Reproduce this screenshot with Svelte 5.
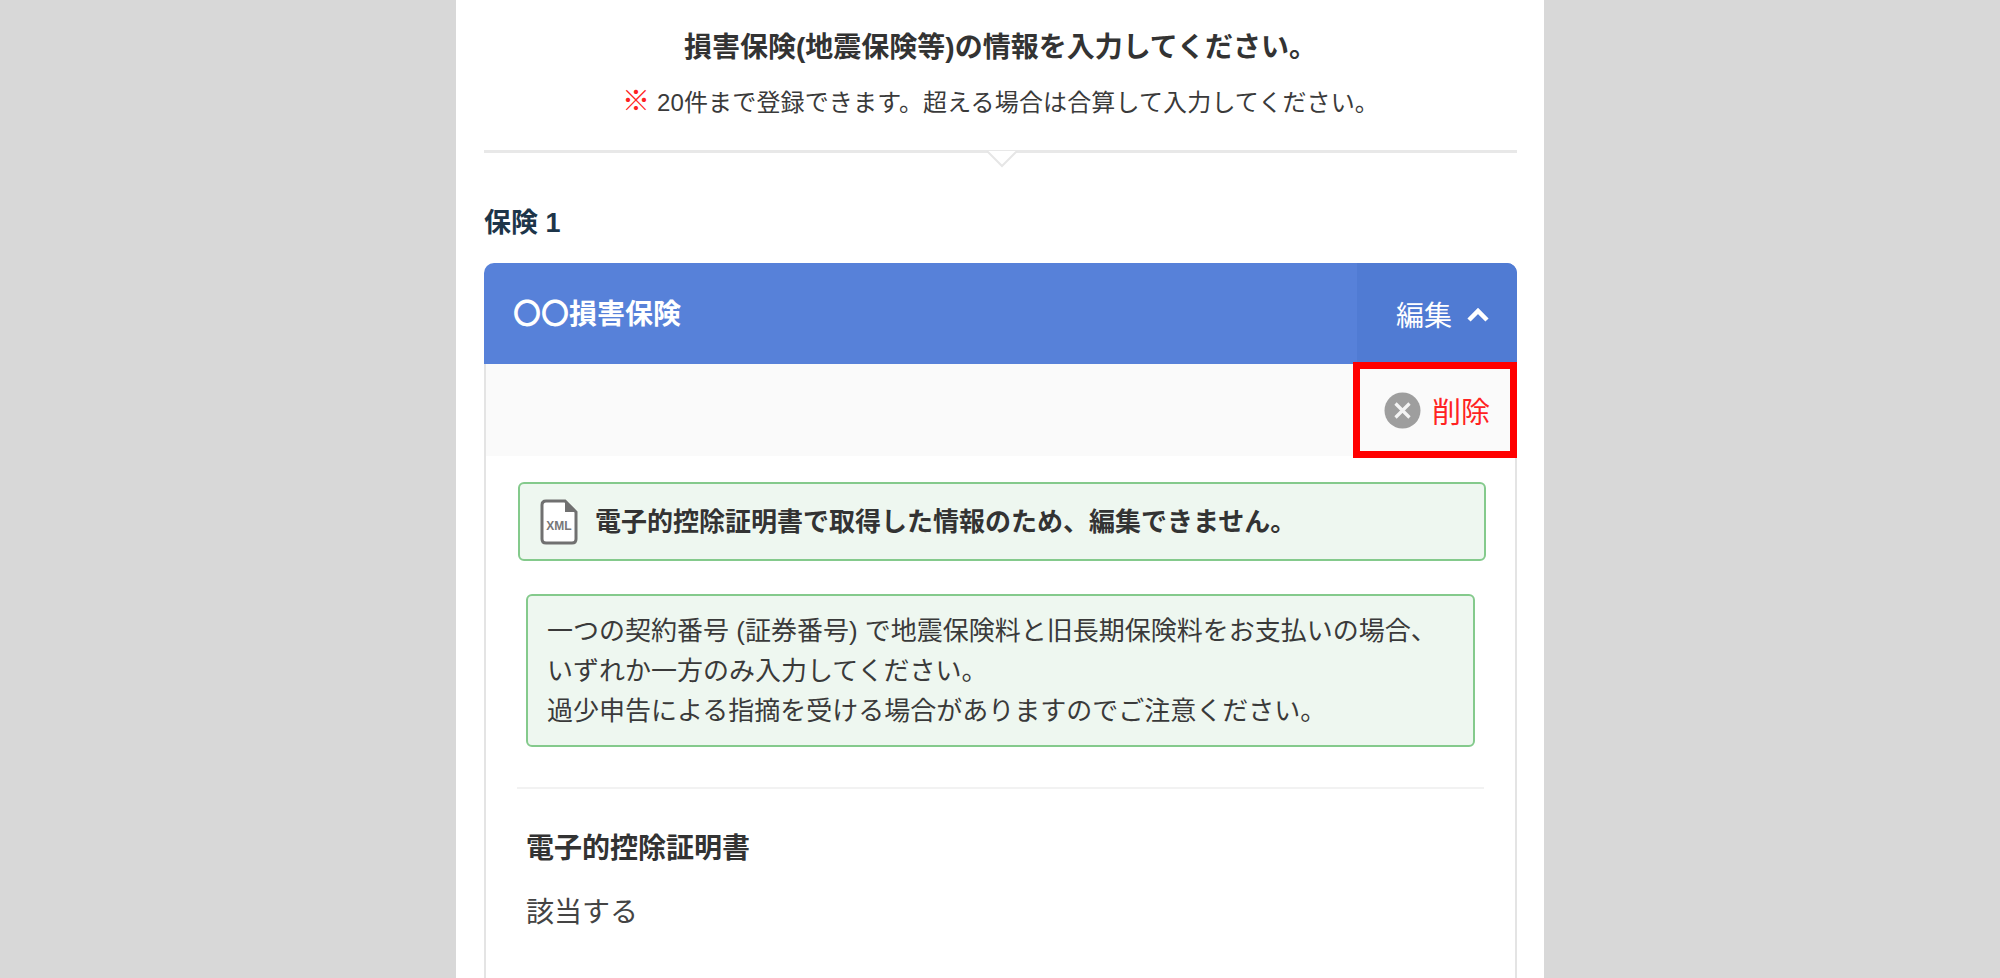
<script lang="ts">
  const noteLines = [
    '一つの契約番号 (証券番号) で地震保険料と旧長期保険料をお支払いの場合、',
    'いずれか一方のみ入力してください。',
    '過少申告による指摘を受ける場合がありますのでご注意ください。'
  ];
</script>

<main class="page">
  <header class="intro">
    <h1>損害保険(地震保険等)の情報を入力してください。</h1>
    <p><span class="mark">※</span> 20件まで登録できます。超える場合は合算して入力してください。</p>
  </header>

  <div class="rule">
    <svg class="notch" width="32" height="17" viewBox="0 0 32 17">
      <path d="M1 0 L16 15 L31 0" fill="#fff" stroke="#e6e6e6" stroke-width="2" />
    </svg>
  </div>

  <h2>保険 1</h2>

  <section class="card">
    <div class="card-head">
      <span class="card-title">〇〇損害保険</span>
      <button class="edit">
        編集
        <svg width="24" height="16" viewBox="0 0 24 16">
          <path d="M3 13 L12 4 L21 13" fill="none" stroke="#fff" stroke-width="4.5" />
        </svg>
      </button>
    </div>

    <div class="delete-row">
      <button class="delete">
        <svg width="37" height="37" viewBox="0 0 37 37">
          <circle cx="18.5" cy="18.5" r="18" fill="#9e9e9e" />
          <path d="M11.5 11.5 L25.5 25.5 M25.5 11.5 L11.5 25.5" stroke="#f4f4f4" stroke-width="3.2" />
        </svg>
        削除
      </button>
      <div class="highlight"></div>
    </div>

    <div class="card-body">
      <div class="notice">
        <svg width="38" height="46" viewBox="0 0 38 46">
          <path d="M6 2 H25 L36 13 V40 Q36 44 32 44 H6 Q2 44 2 40 V6 Q2 2 6 2 Z" fill="#fff" stroke="#707070" stroke-width="3" />
          <path d="M25 2 L36 13 H25 Z" fill="#707070" />
          <text x="19" y="31" text-anchor="middle">XML</text>
        </svg>
        <strong>電子的控除証明書で取得した情報のため、編集できません。</strong>
      </div>

      <div class="note">
        {#each noteLines as line}
          <p>{line}</p>
        {/each}
      </div>

      <hr />

      <dl>
        <dt>電子的控除証明書</dt>
        <dd>該当する</dd>
      </dl>
    </div>
  </section>
</main>

<style>
  :global(body) {
    background: #d8d8d8;
    overflow: hidden;
  }

  .page {
    box-sizing: border-box;
    width: 1088px;
    height: 978px;
    margin-left: 456px;
    padding: 0 27px 0 28px;
    background: #fff;
    overflow: hidden;
    color: #333;
    font-family: "Liberation Sans", "Noto Sans CJK JP", sans-serif;
  }

  .intro {
    padding-top: 28px;
    text-align: center;
  }

  h1 {
    margin: 0;
    font-size: 28px;
    line-height: 40px;
    font-weight: 700;
  }

  .intro p {
    margin: 16px 0 0;
    height: 36px;
    color: #3a3a3a;
    font-size: 24px;
    letter-spacing: 0.15px;
    line-height: 36px;
  }

  .mark {
    color: #f22;
    font-size: 28px;
    font-weight: 700;
  }

  .rule {
    position: relative;
    height: 3px;
    margin-top: 30px;
    background: #e8e8e8;
  }

  .notch {
    position: absolute;
    top: 1px;
    left: 502px;
  }

  h2 {
    margin: 50px 0 0;
    color: #1d3549;
    font-size: 27px;
    line-height: 40px;
    font-weight: 700;
  }

  .card {
    margin-top: 20px;
    height: 800px;
    border-radius: 10px 10px 0 0;
    overflow: hidden;
  }

  .card-head {
    display: flex;
    justify-content: space-between;
    height: 101px;
    background: #5781d9;
    color: #fff;
  }

  .card-title {
    padding: 1px 0 0 29px;
    font-size: 28px;
    font-weight: 700;
    line-height: 101px;
  }

  button {
    border: 0;
    background: none;
    padding: 0;
    font: inherit;
  }

  .edit {
    display: flex;
    align-items: center;
    justify-content: flex-end;
    gap: 14px;
    width: 160px;
    padding-right: 27px;
    box-sizing: border-box;
    background: #507bd3;
    color: #fff;
    font-size: 28px;
  }

  .edit svg {
    margin-top: 2px;
  }

  .delete-row {
    position: relative;
    display: flex;
    justify-content: flex-end;
    align-items: center;
    height: 92px;
    padding-right: 25px;
    background: #fafafa;
    border: solid #e4e4e4;
    border-width: 0 2px;
  }

  .delete {
    display: flex;
    align-items: center;
    gap: 11px;
    color: #f22;
    font-size: 29px;
  }

  .highlight {
    position: absolute;
    top: -2px;
    right: -2px;
    box-sizing: border-box;
    width: 164px;
    height: 96px;
    border: 7px solid #f00;
  }

  .card-body {
    height: 600px;
    padding: 26px 29px 0 32px;
    border: solid #e4e4e4;
    border-width: 0 2px;
  }

  .notice {
    display: flex;
    align-items: center;
    gap: 17px;
    box-sizing: border-box;
    height: 79px;
    padding: 0 0 4px 20px;
    background: #eef7f0;
    border: 2px solid #84ca8c;
    border-radius: 6px;
    font-size: 26px;
  }

  .notice svg {
    margin-top: 4px;
  }

  .notice text {
    fill: #777;
    font-size: 12px;
    font-weight: 700;
  }

  .note {
    box-sizing: border-box;
    height: 153px;
    margin: 33px 11px 0 8px;
    padding: 15px 19px;
    background: #eef7f0;
    border: 2px solid #84ca8c;
    border-radius: 6px;
    color: #3a3a3a;
    font-size: 26px;
    line-height: 40px;
    white-space: nowrap;
  }

  .note p {
    margin: 0;
  }

  hr {
    height: 2px;
    margin: 40px 2px 0 -1px;
    border: 0;
    background: #f2f2f2;
  }

  dl {
    margin: 40px 9px 0 8px;
  }

  dt {
    font-size: 28px;
    font-weight: 700;
    line-height: 40px;
  }

  dd {
    margin: 24px 0 0;
    color: #444;
    font-size: 28px;
    line-height: 40px;
  }
</style>
